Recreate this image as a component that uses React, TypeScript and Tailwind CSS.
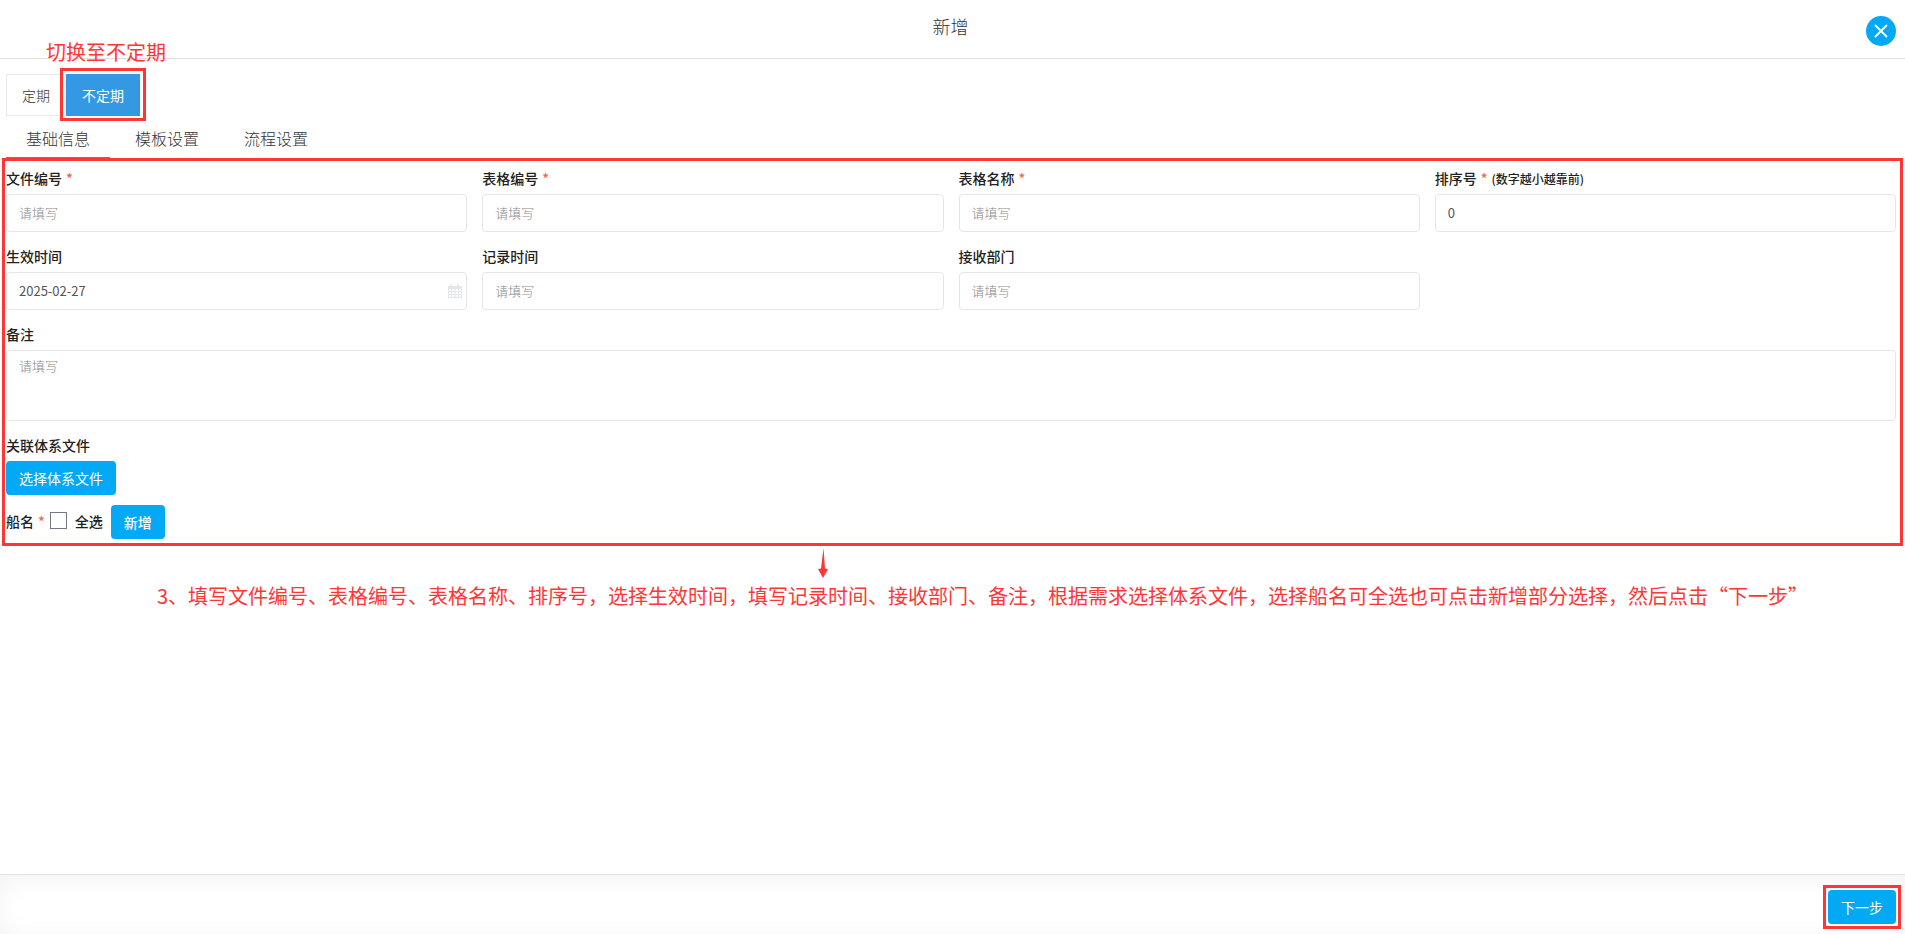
import { useId } from "react";
import type { ReactNode } from "react";
import { X } from "lucide-react";

const tabs = ["基础信息", "模板设置", "流程设置"];

const inputClass =
  "block h-[38px] w-full rounded-[4px] border border-[#e6e6e6] bg-white px-3 pb-[2px] text-[13px] text-[#555] outline-none placeholder:font-light placeholder:text-[#888]";

function Required() {
  return <span className="ml-1 text-sm font-medium text-[#f0674c]">*</span>;
}

function Field({
  label,
  required,
  hint,
  value,
  icon,
}: {
  label: string;
  required?: boolean;
  hint?: string;
  value?: string;
  icon?: ReactNode;
}) {
  const id = useId();
  return (
    <div>
      <label htmlFor={id} className="block h-[30px] text-sm leading-[28px] font-medium text-[#222]">
        {label}
        {required && <Required />}
        {hint && <span className="ml-1 text-xs">{hint}</span>}
      </label>
      <div className="relative">
        <input id={id} type="text" defaultValue={value} placeholder="请填写" className={inputClass} />
        {icon}
      </div>
    </div>
  );
}

function CalendarIcon() {
  return (
    <svg viewBox="0 0 14 14" className="absolute top-3 right-[5px] size-[14px] fill-[#e3e6ea]" aria-hidden="true">
      <path
        fillRule="evenodd"
        d="M0 2h2V1a1 1 0 0 1 2 0v1h5V1a1 1 0 0 1 2 0v1h3v12H0zM1 5v2h2V5zM4 5v2h2.500V5zM7.500 5v2H10V5zM11 5v2h2V5zM1 8v2h2V8zM4 8v2h2.500V8zM7.500 8v2H10V8zM11 8v2h2V8zM1 11v2h2v-2zM4 11v2h2.500v-2zM7.500 11v2H10v-2zM11 11v2h2v-2z"
      />
    </svg>
  );
}

function BlueButton({ children }: { children: ReactNode }) {
  return (
    <button
      type="button"
      className="h-[34px] shrink-0 rounded-[4px] bg-[#03a9f4] px-[13px] pb-px text-sm text-white"
    >
      {children}
    </button>
  );
}

export default function App() {
  return (
    <div
      lang="zh-CN"
      className="flex min-h-screen flex-col bg-white font-['Noto_Sans_CJK_SC','Noto_Sans',sans-serif] text-[#555]"
    >
      <header className="relative flex h-[59px] justify-center border-b border-[#e2e2e2] pt-2">
        <h1 className="pr-1 text-lg leading-9 font-light text-[#333]">新增</h1>
        <button
          type="button"
          aria-label="关闭"
          className="absolute top-4 right-[9px] flex size-[30px] items-center justify-center rounded-full bg-[#03a9f4] text-white"
        >
          <X size={22} strokeWidth={2} />
        </button>
        <p className="absolute top-9 left-[46px] text-xl leading-8 text-[#ff3636]">切换至不定期</p>
      </header>

      <main className="grow">
        <div className="flex px-1.5 pt-[15px]">
          <button type="button" className="h-[42px] w-[60px] border border-[#e9e9e9] text-sm font-light text-[#333]">
            定期
          </button>
          <div className="relative">
            <button type="button" className="h-[42px] w-[74px] bg-[#3498e2] text-sm text-white">
              不定期
            </button>
            <div className="pointer-events-none absolute -inset-x-1.5 -top-1.5 -bottom-[5px] border-[3px] border-[#ff3636]" />
          </div>
        </div>

        <nav className="flex gap-[5px] px-1.5">
          {tabs.map((tab, i) => (
            <button
              key={tab}
              type="button"
              className={
                "h-[42px] w-[104px] border-b pt-[2px] text-base font-light text-[#333] " +
                (i === 0 ? "border-[#2f93cf]" : "border-transparent")
              }
            >
              {tab}
            </button>
          ))}
        </nav>

        <section className="mx-0.5 border-[3px] border-[#ff3636] pt-[3px] pr-1 pb-1 pl-px">
          <div className="grid grid-cols-4 gap-x-[15px] gap-y-[10px]">
            <Field label="文件编号" required />
            <Field label="表格编号" required />
            <Field label="表格名称" required />
            <Field label="排序号" required hint="(数字越小越靠前)" value="0" />
            <Field label="生效时间" value="2025-02-27" icon={<CalendarIcon />} />
            <Field label="记录时间" />
            <Field label="接收部门" />
          </div>

          <div className="mt-[10px]">
            <label htmlFor="remark" className="block h-[30px] text-sm leading-[28px] font-medium text-[#222]">
              备注
            </label>
            <textarea
              id="remark"
              placeholder="请填写"
              className="block h-[71px] w-full resize-none rounded-[4px] border border-[#e6e6e6] px-3 py-[5px] text-[13px] leading-5 outline-none placeholder:font-light placeholder:text-[#888]"
            />
          </div>

          <div className="mt-[10px]">
            <p className="h-[30px] text-sm leading-[28px] font-medium text-[#222]">关联体系文件</p>
            <BlueButton>选择体系文件</BlueButton>
          </div>

          <div className="mt-[10px] flex items-center text-sm font-medium text-[#222]">
            <span className="pb-0.5">
              船名
              <Required />
            </span>
            <label className="mr-2 ml-[5px] flex items-center gap-2 pb-0.5">
              <input
                type="checkbox"
                className="mb-0.5 size-[17px] appearance-none border border-[#6f7a86] bg-white checked:bg-[#03a9f4]"
              />
              全选
            </label>
            <BlueButton>新增</BlueButton>
          </div>
        </section>

        <div className="text-[#ff3636]">
          <svg viewBox="0 0 10 30" className="mt-0.5 ml-[818px] h-[30px] w-[10px] fill-current" aria-hidden="true">
            <path d="M5.500 0 7 20.500l3 .5-5 9-5-9 3-.5z" />
          </svg>
          <p className="pt-[2px] pl-[157px] text-xl leading-8">
            3、填写文件编号、表格编号、表格名称、排序号，选择生效时间，填写记录时间、接收部门、备注，根据需求选择体系文件，选择船名可全选也可点击新增部分选择，然后点击“下一步”
          </p>
        </div>
      </main>

      <footer className="flex h-[60px] justify-end border-t border-[#e2e2e2] pt-[15px] pr-[9px] shadow-[inset_0_4px_24px_rgba(0,0,0,0.05)]">
        <div className="relative h-[34px]">
          <BlueButton>下一步</BlueButton>
          <div className="pointer-events-none absolute -inset-[5px] border-[3px] border-[#ff3636]" />
        </div>
      </footer>
    </div>
  );
}
